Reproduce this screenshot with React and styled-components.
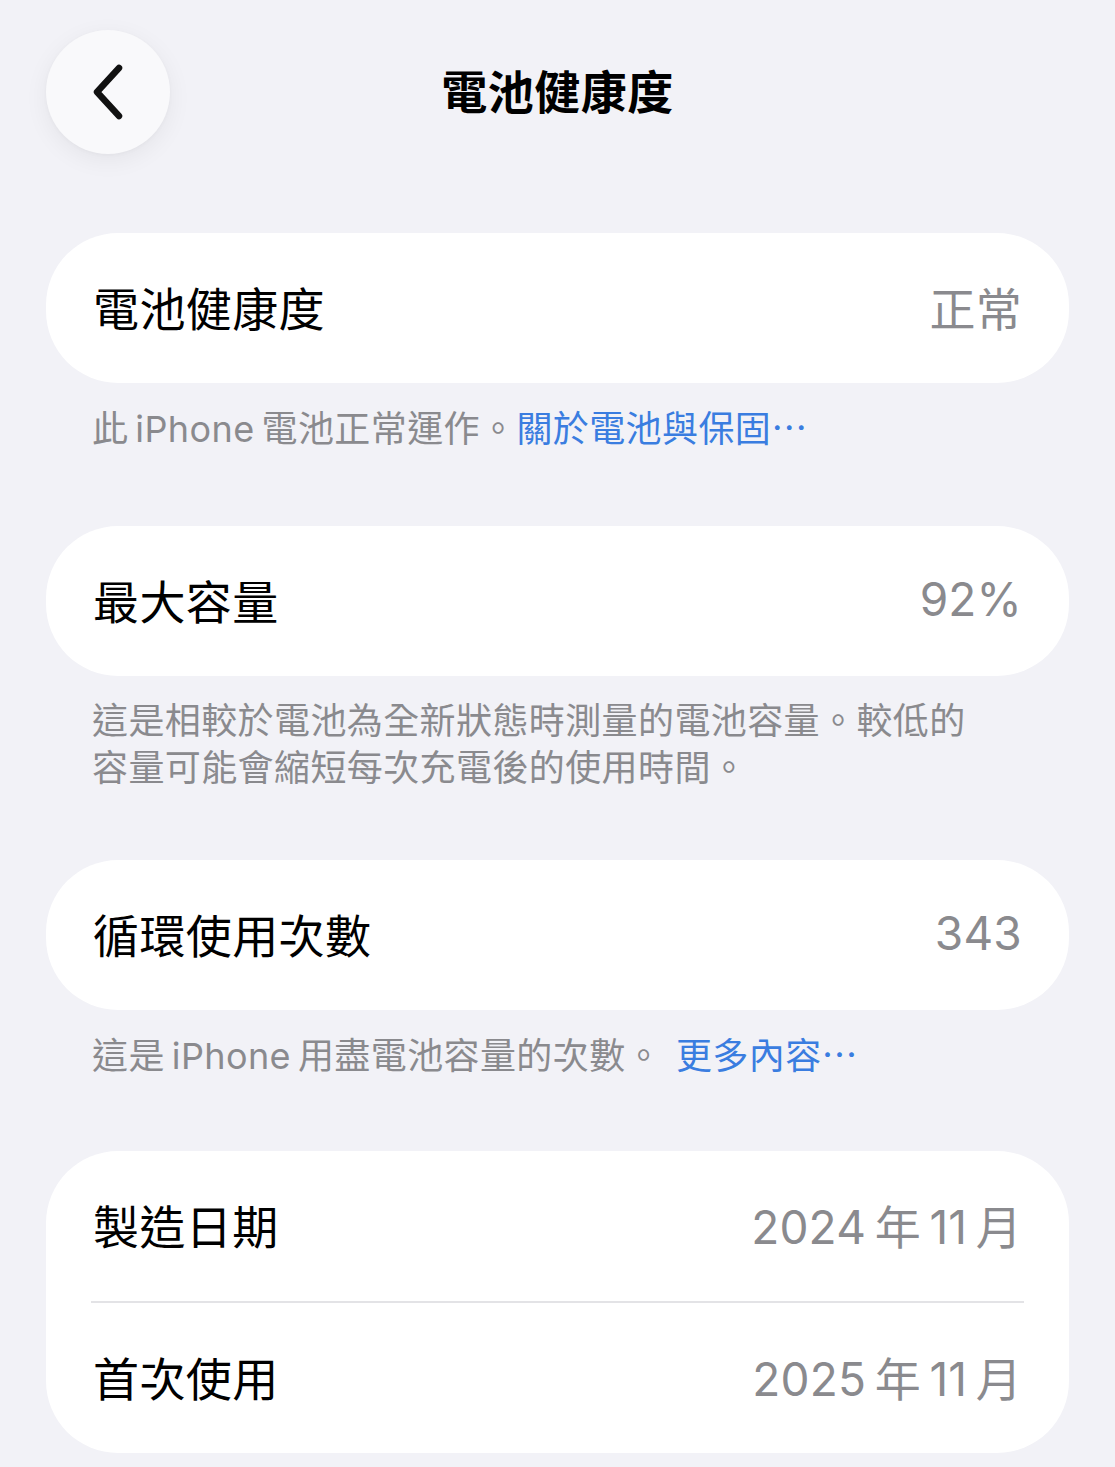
import React from 'react'
import styled, { createGlobalStyle } from 'styled-components'

const GlobalStyle = createGlobalStyle`
  html, body {
    margin: 0;
    padding: 0;
    background: #f2f2f7;
  }
  body {
    font-family: "Inter", "Noto Sans CJK TC", sans-serif;
    -webkit-font-smoothing: antialiased;
  }
`

const Page = styled.div`
  min-height: 1467px;
  background: #f2f2f7;
  padding: 30px 46px 0;
  box-sizing: border-box;
`

const Header = styled.div`
  position: relative;
  height: 124px;
  display: flex;
  align-items: center;
  justify-content: center;
  margin-bottom: 79px;
`

const BackButton = styled.button`
  position: absolute;
  left: 0;
  top: 0;
  width: 124px;
  height: 124px;
  border-radius: 50%;
  border: none;
  background: #f9f9fb;
  box-shadow: 0 6px 24px rgba(0, 0, 0, 0.06), 0 1px 4px rgba(0, 0, 0, 0.03);
  display: flex;
  align-items: center;
  justify-content: center;
  padding: 0;
  cursor: pointer;
`

const Title = styled.h1`
  margin: 0;
  font-size: 46px;
  font-weight: 700;
  color: #000;
  letter-spacing: 0.5px;
  line-height: 1;
`

const Card = styled.div`
  background: #fff;
  border-radius: 72px;
  overflow: hidden;
`

const Row = styled.div`
  height: 150px;
  display: flex;
  align-items: center;
  justify-content: space-between;
  padding: 0 47px 4px;
  box-sizing: border-box;
`

const Divider = styled.div`
  height: 2px;
  background: #e3e3e6;
  margin: 0 45px;
`

const Label = styled.span`
  font-size: 46px;
  font-weight: 400;
  color: #000;
  letter-spacing: 0.4px;
`

const Value = styled.span`
  font-size: 46px;
  color: #8a8a8e;
  letter-spacing: 0.2px;
`

const Footnote = styled.p`
  margin: 0;
  padding: ${props => props.top || 23}px 80px ${props => props.bottom || 73}px 46px;
  font-size: 36px;
  line-height: 47px;
  color: #8a8a8e;
  letter-spacing: 0.4px;
`

const Link = styled.a`
  color: #3a7de0;
  text-decoration: none;
  margin-left: ${props => props.gap ? '14px' : '0'};
`

const Chevron = () => (
  <svg width="40" height="60" viewBox="0 0 40 60" fill="none">
    <path
      d="M31 6 L9 30 L31 54"
      stroke="#111"
      strokeWidth="6.5"
      strokeLinecap="round"
      strokeLinejoin="round"
    />
  </svg>
)

const SingleRow = ({ label, value }) => (
  <Card>
    <Row>
      <Label>{label}</Label>
      <Value>{value}</Value>
    </Row>
  </Card>
)

const App = () => {
  return (
    <>
      <GlobalStyle />
      <Page>
        <Header>
          <BackButton aria-label="返回">
            <Chevron />
          </BackButton>
          <Title>電池健康度</Title>
        </Header>

        <SingleRow label="電池健康度" value="正常" />
        <Footnote>
          此{'\u2009'}iPhone{'\u2009'}電池正常運作。<Link href="#">關於電池與保固⋯</Link>
        </Footnote>

        <SingleRow label="最大容量" value="92%" />
        <Footnote top={22} bottom={68}>
          這是相較於電池為全新狀態時測量的電池容量。較低的容量可能會縮短每次充電後的使用時間。
        </Footnote>

        <SingleRow label="循環使用次數" value="343" />
        <Footnote top={23} bottom={71}>
          這是{'\u2009'}iPhone{'\u2009'}用盡電池容量的次數。<Link href="#" gap>更多內容⋯</Link>
        </Footnote>

        <Card>
          <Row>
            <Label>製造日期</Label>
            <Value>2024{'\u2009'}年{'\u2009'}11{'\u2009'}月</Value>
          </Row>
          <Divider />
          <Row>
            <Label>首次使用</Label>
            <Value>2025{'\u2009'}年{'\u2009'}11{'\u2009'}月</Value>
          </Row>
        </Card>
      </Page>
    </>
  )
}

export default App
